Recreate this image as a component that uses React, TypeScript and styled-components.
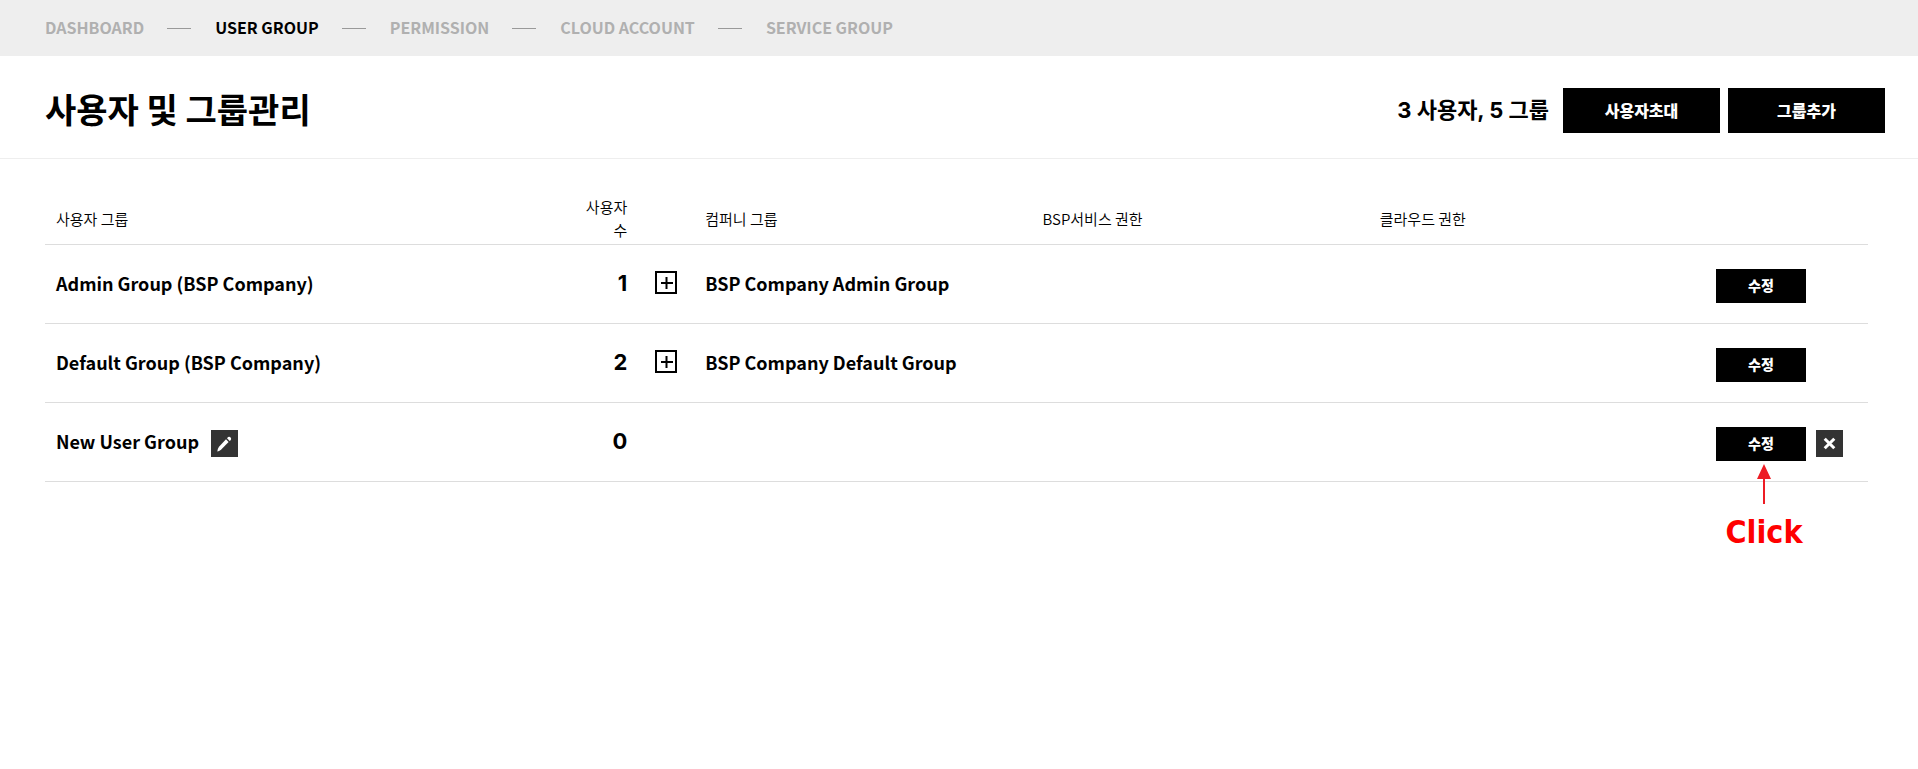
import React from 'react';
import styled, { createGlobalStyle } from 'styled-components';

const GlobalStyle = createGlobalStyle`
  *, *::before, *::after { box-sizing: border-box; }
  body {
    margin: 0;
    background: #fff;
    color: #000;
    font-family: "Noto Sans CJK KR", "Noto Sans", sans-serif;
    font-size: 14px;
    line-height: 24px;
  }
  button { font-family: inherit; cursor: pointer; }
`;

const Page = styled.div`
  min-height: 100vh;
`;

const TopNav = styled.nav`
  display: flex;
  align-items: center;
  height: 56px;
  padding: 0 45px;
  background: #eee;
`;

const NavList = styled.ul`
  display: flex;
  align-items: center;
  margin: 0;
  padding: 0 0 2px;
  list-style: none;
`;

const NavItem = styled.li`
  display: flex;
  align-items: center;

  & + &::before {
    content: '';
    width: 24px;
    height: 1px;
    margin: 3px 24px 0 23px;
    background: #999;
  }
`;

const NavLink = styled.a<{ $active?: boolean }>`
  color: ${({ $active }) => ($active ? '#000' : '#b0b0b0')};
  font-size: 16px;
  font-weight: 700;
  text-decoration: none;
  white-space: nowrap;
`;

const PageHeader = styled.header`
  display: flex;
  align-items: center;
  justify-content: space-between;
  padding: 32px 33px 25px 45px;
  border-bottom: 1px solid #eee;
`;

const Title = styled.h1`
  margin: 0;
  padding-bottom: 4px;
  font-size: 34px;
  font-weight: 700;
  line-height: 40px;
`;

const HeaderActions = styled.div`
  display: flex;
  align-items: center;
  gap: 8px;
`;

const Summary = styled.span`
  margin-right: 6px;
  padding-bottom: 2px;
  font-family: Inter, "Noto Sans CJK KR", sans-serif;
  font-size: 22px;
  font-weight: 700;
`;

const BlackButton = styled.button<{ $small?: boolean }>`
  width: ${({ $small }) => ($small ? 90 : 157)}px;
  height: ${({ $small }) => ($small ? 34 : 45)}px;
  padding: 0 0 2px;
  border: 0;
  background: #000;
  color: #fff;
  font-size: ${({ $small }) => ($small ? 14 : 16)}px;
  font-weight: 900;
`;

const Content = styled.main`
  padding: 36px 50px 40px 45px;
`;

const GroupTable = styled.table`
  width: 100%;
  table-layout: fixed;
  border-collapse: separate;
  border-spacing: 0;
`;

const Col = styled.col<{ $width?: string }>`
  width: ${({ $width }) => $width ?? 'auto'};
`;

const HeadCell = styled.th<{ $right?: boolean }>`
  height: 50px;
  padding: 0 11px 3px;
  border-bottom: 1px solid #ddd;
  font-size: 15px;
  font-weight: 350;
  line-height: 23px;
  text-align: ${({ $right }) => ($right ? 'right' : 'left')};
  vertical-align: middle;
`;

const Cell = styled.td`
  height: 79px;
  padding: 2px 11px 0;
  border-bottom: 1px solid #ddd;
`;

const CountCell = styled(Cell)`
  padding: 0 11px 2px;
  font-family: Inter, "Noto Sans CJK KR", sans-serif;
  font-size: 22px;
  font-weight: 700;
  text-align: right;
`;

const ToggleCell = styled(Cell)`
  padding: 0 17px 3px;
`;

const ActionCell = styled(Cell)`
  padding: 3px 10px 0;
`;

const NameLine = styled.div`
  display: flex;
  align-items: center;
  gap: 12px;
`;

const GroupName = styled.span`
  padding-bottom: 4px;
  font-size: 18px;
  font-weight: 700;
`;

const ToggleButton = styled.button`
  display: block;
  width: 22px;
  height: 23px;
  padding: 0;
  border: 0;
  background: none;
`;

const IconButton = styled.button`
  display: flex;
  align-items: center;
  justify-content: center;
  width: 27px;
  height: 27px;
  padding: 0;
  border: 0;
  background: #333;
`;

const Actions = styled.div`
  display: flex;
  align-items: center;
  gap: 10px;
`;

const CalloutAnchor = styled.div`
  position: relative;
  display: flex;
`;

const Callout = styled.div`
  position: absolute;
  top: 100%;
  left: 0;
  display: flex;
  flex-direction: column;
  align-items: center;
  width: 96px;
  padding-top: 3px;
  color: #f00;
  font-family: "DejaVu Sans Condensed", "Noto Sans", sans-serif;
  font-size: 32px;
  font-weight: 700;
  line-height: 56px;
  pointer-events: none;
`;

const PlusIcon = () => (
  <svg width="22" height="23" viewBox="0 0 22 23" fill="none" stroke="#000" strokeWidth="2" aria-hidden="true">
    <rect x="1" y="1" width="20" height="21" />
    <path d="M11.5 6v12M6 12h12" />
  </svg>
);

const PencilIcon = () => (
  <svg width="27" height="27" viewBox="0 0 27 27" fill="#fff" aria-hidden="true">
    <path d="M15 9.3 17.6 12 10 19.8Q8 21.4 6.3 21.4 6.5 19 8 16.8Z" />
    <path d="M16 8.3Q17.8 6 19.6 7.4 21 9 18.7 11Z" />
  </svg>
);

const CloseIcon = () => (
  <svg width="27" height="27" viewBox="0 0 27 27" stroke="#fff" strokeWidth="3" aria-hidden="true">
    <path d="m8.7 8.7 9.6 9.6M18.3 8.7l-9.6 9.6" />
  </svg>
);

const ArrowIcon = () => (
  <svg width="14" height="40" viewBox="0 0 14 40" fill="#ed1c24" aria-hidden="true">
    <path d="M7 0l7 15H8v25H6V15H0z" />
  </svg>
);

const navItems = ['DASHBOARD', 'USER GROUP', 'PERMISSION', 'CLOUD ACCOUNT', 'SERVICE GROUP'];

interface Group {
  name: string;
  users: number;
  company?: string;
  custom?: boolean;
}

const groups: Group[] = [
  { name: 'Admin Group (BSP Company)', users: 1, company: 'BSP Company Admin Group' },
  { name: 'Default Group (BSP Company)', users: 2, company: 'BSP Company Default Group' },
  { name: 'New User Group', users: 0, custom: true },
];

const GroupRow = ({ group }: { group: Group }) => (
  <tr>
    <Cell>
      <NameLine>
        <GroupName>{group.name}</GroupName>
        {group.custom && (
          <IconButton type="button" aria-label="이름 수정">
            <PencilIcon />
          </IconButton>
        )}
      </NameLine>
    </Cell>
    <CountCell>{group.users}</CountCell>
    <ToggleCell>
      {group.company && (
        <ToggleButton type="button" aria-label="펼치기">
          <PlusIcon />
        </ToggleButton>
      )}
    </ToggleCell>
    <Cell>
      {group.company && (
        <NameLine>
          <GroupName>{group.company}</GroupName>
        </NameLine>
      )}
    </Cell>
    <Cell />
    <Cell />
    <ActionCell>
      <Actions>
        <CalloutAnchor>
          <BlackButton type="button" $small>수정</BlackButton>
          {group.custom && (
            <Callout>
              <ArrowIcon />
              Click
            </Callout>
          )}
        </CalloutAnchor>
        {group.custom && (
          <IconButton type="button" aria-label="삭제">
            <CloseIcon />
          </IconButton>
        )}
      </Actions>
    </ActionCell>
  </tr>
);

export default function App() {
  return (
    <Page>
      <GlobalStyle />
      <TopNav>
        <NavList>
          {navItems.map((item) => (
            <NavItem key={item}>
              <NavLink href="#" $active={item === 'USER GROUP'}>{item}</NavLink>
            </NavItem>
          ))}
        </NavList>
      </TopNav>
      <PageHeader>
        <Title>사용자 및 그룹관리</Title>
        <HeaderActions>
          <Summary>3 사용자, 5 그룹</Summary>
          <BlackButton type="button">사용자초대</BlackButton>
          <BlackButton type="button">그룹추가</BlackButton>
        </HeaderActions>
      </PageHeader>
      <Content>
        <GroupTable>
          <colgroup>
            <Col />
            <Col $width="75px" />
            <Col $width="56px" />
            <Col $width="18.5%" />
            <Col $width="18.5%" />
            <Col $width="18.5%" />
            <Col $width="162px" />
          </colgroup>
          <thead>
            <tr>
              <HeadCell scope="col">사용자 그룹</HeadCell>
              <HeadCell scope="col" $right>사용자 수</HeadCell>
              <HeadCell />
              <HeadCell scope="col">컴퍼니 그룹</HeadCell>
              <HeadCell scope="col">BSP서비스 권한</HeadCell>
              <HeadCell scope="col">클라우드 권한</HeadCell>
              <HeadCell />
            </tr>
          </thead>
          <tbody>
            {groups.map((group) => (
              <GroupRow key={group.name} group={group} />
            ))}
          </tbody>
        </GroupTable>
      </Content>
    </Page>
  );
}
